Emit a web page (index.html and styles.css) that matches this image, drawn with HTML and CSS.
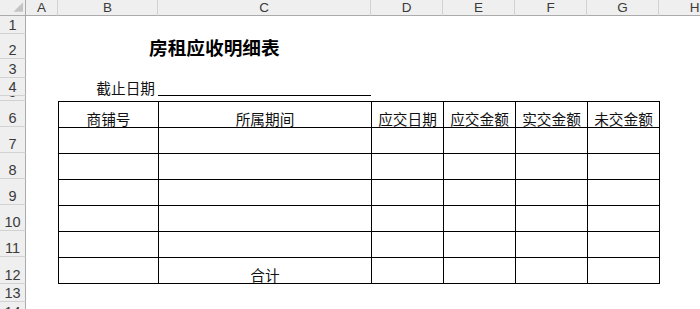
FILE: index.html
```html
<!DOCTYPE html>
<html lang="zh">
<head>
<meta charset="utf-8">
<title>房租应收明细表</title>
<link rel="stylesheet" href="styles.css">
</head>
<body>
<div class="sheet">
  <div class="row r-head">
    <div class="corner"><svg width="26" height="15" viewBox="0 0 26 15"><polygon points="24,2 24,12 14,12" fill="#c4c4c4"/></svg></div>
    <div class="ch">A</div>
    <div class="ch">B</div>
    <div class="ch">C</div>
    <div class="ch">D</div>
    <div class="ch">E</div>
    <div class="ch">F</div>
    <div class="ch">G</div>
    <div class="ch">H</div>
  </div>
  <div class="row r1"><div class="rh">1</div></div>
  <div class="row r2"><div class="rh">2</div><div class="title">房租应收明细表</div></div>
  <div class="row r3"><div class="rh">3</div></div>
  <div class="row r4"><div class="rh">4</div><div class="cut">截止日期</div><div class="blank-line"></div></div>
  <div class="row r5"><div class="rh">5</div></div>
  <div class="row r6">
    <div class="rh">6</div>
    <div class="td first">商铺号</div>
    <div class="td">所属期间</div>
    <div class="td">应交日期</div>
    <div class="td">应交金额</div>
    <div class="td">实交金额</div>
    <div class="td last">未交金额</div>
  </div>
  <div class="row rd">
    <div class="rh">7</div>
    <div class="td first"></div><div class="td"></div><div class="td"></div><div class="td"></div><div class="td"></div><div class="td last"></div>
  </div>
  <div class="row rd">
    <div class="rh">8</div>
    <div class="td first"></div><div class="td"></div><div class="td"></div><div class="td"></div><div class="td"></div><div class="td last"></div>
  </div>
  <div class="row rd">
    <div class="rh">9</div>
    <div class="td first"></div><div class="td"></div><div class="td"></div><div class="td"></div><div class="td"></div><div class="td last"></div>
  </div>
  <div class="row rd">
    <div class="rh">10</div>
    <div class="td first"></div><div class="td"></div><div class="td"></div><div class="td"></div><div class="td"></div><div class="td last"></div>
  </div>
  <div class="row rd">
    <div class="rh">11</div>
    <div class="td first"></div><div class="td"></div><div class="td"></div><div class="td"></div><div class="td"></div><div class="td last"></div>
  </div>
  <div class="row rd r12">
    <div class="rh">12</div>
    <div class="td first"></div><div class="td">合计</div><div class="td"></div><div class="td"></div><div class="td"></div><div class="td last"></div>
  </div>
  <div class="row r13"><div class="rh">13</div></div>
  <div class="row r14"><div class="rh">14</div></div>
</div>
</body>
</html>
```
FILE: styles.css
```css
html, body {
  margin: 0;
  padding: 0;
  background: #fff;
  overflow: hidden;
}

.sheet {
  width: 731px;
  font-family: "Noto Sans CJK SC", "Noto Sans", sans-serif;
  color: #111;
}

.row {
  display: grid;
  grid-template-columns: 26px 32px 100px 213px 72px 72px 72px 72px 72px;
  box-sizing: border-box;
}

.r-head { height: 16px; }
.r1 { height: 18px; }
.r2 { height: 25px; }
.r3 { height: 19px; }
.r4 { height: 18px; }
.r5 { height: 5px; }
.r6 { height: 26px; }
.rd { height: 26px; }
.rd.r12 { height: 27px; }
.r13 { height: 18px; }
.r14 { height: 19px; }

.corner {
  background: #efefef;
  border-bottom: 1px solid #ababab;
  border-right: 1px solid #ababab;
  box-sizing: border-box;
  display: flex;
}

.ch {
  background: #efefef;
  border-bottom: 1px solid #ababab;
  border-right: 1px solid #d2d2d2;
  box-sizing: border-box;
  font-family: "Liberation Sans", Arial, sans-serif;
  font-size: 13.5px;
  line-height: 15px;
  color: #3a3a3a;
  text-align: center;
}

.rh {
  background: #efefef;
  border-bottom: 1px solid #d2d2d2;
  border-right: 1px solid #ababab;
  box-sizing: border-box;
  font-family: "Liberation Sans", Arial, sans-serif;
  font-size: 14.5px;
  line-height: 14px;
  color: #3a3a3a;
  display: flex;
  align-items: flex-end;
  justify-content: center;
  overflow: hidden;
  padding-bottom: 1px;
}

.title {
  grid-column: 3 / 10;
  padding-left: 91px;
  font-size: 18.67px;
  font-weight: bold;
  line-height: 1;
  display: flex;
  align-items: flex-end;
  padding-bottom: 2px;
  color: #000;
}

.cut {
  grid-column: 3;
  font-size: 14.67px;
  line-height: 1;
  display: flex;
  align-items: flex-end;
  justify-content: flex-end;
  padding-right: 3px;
  white-space: nowrap;
}

.blank-line {
  grid-column: 4;
  border-bottom: 1px solid #000;
}

.td {
  border-left: 1px solid #000;
  border-top: 1px solid #000;
  box-sizing: border-box;
  font-size: 14.67px;
  line-height: 1;
  display: flex;
  align-items: flex-end;
  justify-content: center;
  white-space: nowrap;
}

.td.first {
  grid-column: 3;
}

.td.last {
  border-right: 1px solid #000;
  width: 73px;
}

.r12 .td {
  border-bottom: 1px solid #000;
}
```
